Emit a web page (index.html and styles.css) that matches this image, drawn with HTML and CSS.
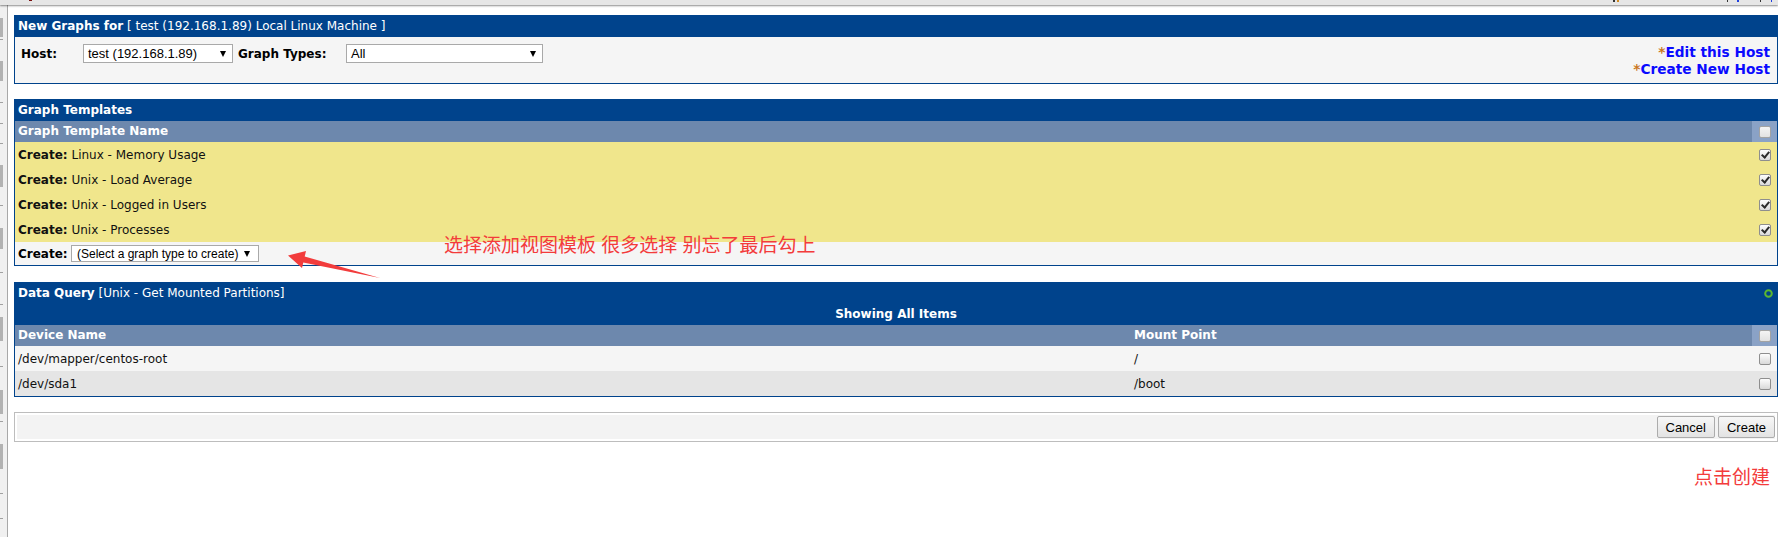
FILE: index.html
```html
<!DOCTYPE html>
<html lang="en">
<head>
<meta charset="utf-8">
<title>New Graphs</title>
<link rel="stylesheet" href="styles.css">
</head>
<body>
<div class="topbar">
  <i class="mk mk1"></i><i class="mk mk2"></i><i class="mk mk3"></i><i class="mk mk4"></i><i class="mk mk5"></i><i class="mk mk6"></i><i class="mk mk7"></i>
</div>
<div class="page">
  <div class="strip"></div>
  <main class="main">
    <section class="panel">
      <div class="hdr"><b>New Graphs for</b> [ test (192.168.1.89) Local Linux Machine ]</div>
      <div class="host-body">
        <div class="host-left">
          <span class="lbl host-lbl">Host:</span>
          <div class="sel sel-host"><span>test (192.168.1.89)</span><i class="caret"></i></div>
          <span class="lbl gt-lbl">Graph Types:</span>
          <div class="sel sel-type"><span>All</span><i class="caret"></i></div>
        </div>
        <div class="host-links">
          <a href="#"><span class="ast">*</span>Edit this Host</a>
          <a href="#"><span class="ast">*</span>Create New Host</a>
        </div>
      </div>
    </section>

    <section class="panel gap16">
      <div class="hdr"><b>Graph Templates</b></div>
      <div class="colhdr">
        <div class="c1">Graph Template Name</div>
        <div class="cbcell"><span class="cb cb-hdr"></span></div>
      </div>
      <div class="trow"><div class="c1"><b>Create:</b> Linux - Memory Usage</div><div class="cbwrap"><span class="cb on"></span></div></div>
      <div class="trow"><div class="c1"><b>Create:</b> Unix - Load Average</div><div class="cbwrap"><span class="cb on"></span></div></div>
      <div class="trow"><div class="c1"><b>Create:</b> Unix - Logged in Users</div><div class="cbwrap"><span class="cb on"></span></div></div>
      <div class="trow"><div class="c1"><b>Create:</b> Unix - Processes</div><div class="cbwrap"><span class="cb on"></span></div></div>
      <div class="create-row">
        <span class="lbl create-lbl">Create:</span>
        <div class="sel sel-small"><span>(Select a graph type to create)</span><i class="caret"></i></div>
      </div>
    </section>

    <section class="panel gap17">
      <div class="dq-hdr">
        <div class="dq-title">
          <span><b>Data Query</b> [Unix - Get Mounted Partitions]</span>
          <svg class="ring" width="9" height="9" viewBox="0 0 9 9"><circle cx="4.5" cy="4.5" r="3.3" fill="none" stroke="#5cb82f" stroke-width="2"/></svg>
        </div>
        <div class="dq-sub">Showing All Items</div>
      </div>
      <div class="grid3 colhdr3">
        <div class="cell">Device Name</div>
        <div class="cell">Mount Point</div>
        <div class="cbcell"><span class="cb cb-hdr"></span></div>
      </div>
      <div class="grid3 drow odd">
        <div class="cell">/dev/mapper/centos-root</div>
        <div class="cell">/</div>
        <div class="cbwrap"><span class="cb"></span></div>
      </div>
      <div class="grid3 drow even">
        <div class="cell">/dev/sda1</div>
        <div class="cell">/boot</div>
        <div class="cbwrap"><span class="cb"></span></div>
      </div>
    </section>

    <div class="actions">
      <div class="actions-inner">
        <button class="btn" type="button">Cancel</button>
        <button class="btn" type="button">Create</button>
      </div>
    </div>

    <div class="note">点击创建</div>
  </main>
</div>

<div class="annot">选择添加视图模板 很多选择 别忘了最后勾上</div>
<svg class="arrow" width="400" height="290" viewBox="0 0 400 290">
  <polygon points="288,255.5 306,251 304.7,256.6 380,278 303.3,262.4 302,268" fill="#f23c3c"/>
</svg>
</body>
</html>
```

FILE: styles.css
```css
html, body {
  margin: 0;
  padding: 0;
}

body {
  font-family: "DejaVu Sans", Verdana, sans-serif;
  font-size: 12px;
  color: #000;
  background: #fff;
  position: relative;
  overflow: hidden;
}

.topbar {
  position: relative;
  height: 5px;
  background: #e6e6e6;
  box-shadow: 0 1px 2px rgba(0, 0, 0, 0.45);
  z-index: 2;
}

.mk {
  position: absolute;
  top: 0;
  height: 2px;
  width: 2px;
  background: #333;
}
.mk1 { left: 29px; width: 3px; height: 1px; background: #7a1010; }
.mk2 { left: 1613px; }
.mk3 { left: 1617px; background: #d08a20; }
.mk4 { left: 1727px; width: 1px; }
.mk5 { left: 1737px; background: #2040e0; }
.mk6 { left: 1760px; width: 1px; }
.mk7 { left: 1771px; width: 1px; background: #2040e0; }

.page {
  display: flex;
  min-height: 532px;
}

.strip {
  flex: none;
  width: 7px;
  border-right: 1px solid #a8a8a8;
  background:
    linear-gradient(#b2b2b2, #b2b2b2) 0 13px / 3px 19px no-repeat,
    linear-gradient(#b2b2b2, #b2b2b2) 0 56px / 3px 20px no-repeat,
    linear-gradient(#b2b2b2, #b2b2b2) 0 160px / 3px 22px no-repeat,
    linear-gradient(#b2b2b2, #b2b2b2) 0 223px / 3px 21px no-repeat,
    linear-gradient(#b2b2b2, #b2b2b2) 0 312px / 3px 24px no-repeat,
    linear-gradient(#b2b2b2, #b2b2b2) 0 385px / 3px 24px no-repeat,
    linear-gradient(#b2b2b2, #b2b2b2) 0 439px / 3px 25px no-repeat,
    linear-gradient(#a0a0a0, #a0a0a0) 0 34px / 3px 1px no-repeat,
    linear-gradient(#a0a0a0, #a0a0a0) 0 97px / 3px 1px no-repeat,
    linear-gradient(#a0a0a0, #a0a0a0) 0 118px / 3px 1px no-repeat,
    linear-gradient(#a0a0a0, #a0a0a0) 0 138px / 3px 1px no-repeat,
    linear-gradient(#a0a0a0, #a0a0a0) 0 200px / 3px 1px no-repeat,
    linear-gradient(#a0a0a0, #a0a0a0) 0 267px / 3px 1px no-repeat,
    linear-gradient(#a0a0a0, #a0a0a0) 0 299px / 3px 1px no-repeat,
    linear-gradient(#a0a0a0, #a0a0a0) 0 361px / 3px 1px no-repeat,
    linear-gradient(#a0a0a0, #a0a0a0) 0 416px / 3px 1px no-repeat,
    linear-gradient(#a0a0a0, #a0a0a0) 0 488px / 3px 1px no-repeat,
    linear-gradient(#a0a0a0, #a0a0a0) 0 513px / 3px 1px no-repeat,
    #f0f0f0;
}

.main {
  flex: 1;
  min-width: 0;
  padding: 10px 0 0 6px;
}

.panel {
  border: 1px solid #00438c;
}
.gap16 { margin-top: 15px; }
.gap17 { margin-top: 16px; }

.hdr {
  background: #00438c;
  color: #fff;
  height: 21px;
  line-height: 21px;
  padding-left: 3px;
  white-space: nowrap;
}

b, .lbl { font-weight: bold; }

/* host row */
.host-body {
  box-sizing: border-box;
  height: 46px;
  background: #f5f5f5;
  display: flex;
  justify-content: space-between;
  align-items: flex-start;
  padding: 7px 7px 0 6px;
}
.host-left {
  display: flex;
  align-items: center;
  height: 19px;
}
.host-lbl { width: 62px; }
.gt-lbl { width: 108px; margin-left: 5px; }

.sel {
  box-sizing: border-box;
  height: 19px;
  border: 1px solid #a9a9a9;
  background: #fff;
  display: flex;
  align-items: center;
  justify-content: space-between;
  padding: 0 6px 0 4px;
  font-family: "Liberation Sans", Arial, sans-serif;
  font-size: 13px;
  color: #000;
  white-space: nowrap;
}
.sel-host { width: 150px; }
.sel-type { width: 197px; }
.sel-small {
  width: 188px;
  height: 17px;
  font-size: 12px;
  padding: 0 8px 0 5px;
}

.caret {
  display: block;
  width: 0;
  height: 0;
  border-left: 3.5px solid transparent;
  border-right: 3.5px solid transparent;
  border-top: 6px solid #000;
}

.host-links {
  display: flex;
  flex-direction: column;
  align-items: flex-end;
  font-weight: bold;
  font-size: 13.7px;
  line-height: 17px;
}
.host-links a {
  color: #0a0aff;
  text-decoration: none;
}
.ast { color: #c9771f; }

/* graph templates */
.colhdr {
  display: grid;
  grid-template-columns: 1fr 25px;
  background: #6d88ad;
  color: #fff;
  font-weight: bold;
  height: 21px;
  line-height: 21px;
}
.c1 { padding-left: 3px; white-space: nowrap; }

.cbcell {
  background: #8aa2c6;
  display: flex;
  align-items: center;
  justify-content: center;
}
.cbwrap {
  display: flex;
  align-items: center;
  justify-content: center;
}

.cb {
  display: block;
  position: relative;
  box-sizing: border-box;
  width: 12px;
  height: 12px;
  border: 1px solid #8e8e8e;
  border-radius: 2px;
  background: linear-gradient(#fdfdfd, #d9d9d9);
}
.cb-hdr {
  border-color: #a3a3a3;
  background: linear-gradient(#f4f4f4, #e2e2e2);
}
.cb.on::after {
  content: "";
  position: absolute;
  left: 3px;
  top: 0;
  width: 3px;
  height: 6px;
  border: solid #2b2b2b;
  border-width: 0 2px 2px 0;
  transform: rotate(40deg);
}

.trow {
  display: grid;
  grid-template-columns: 1fr 25px;
  align-items: center;
  height: 25px;
  background: #f0e68c;
  color: #111;
}

.create-row {
  box-sizing: border-box;
  height: 23px;
  background: #f5f5f5;
  display: flex;
  align-items: center;
  padding-left: 3px;
}
.create-lbl { width: 53px; }

/* data query */
.dq-hdr {
  background: #00438c;
  color: #fff;
}
.dq-title {
  height: 21px;
  line-height: 21px;
  display: flex;
  justify-content: space-between;
  align-items: center;
  padding: 0 4px 0 3px;
  white-space: nowrap;
}
.ring { display: block; }
.dq-sub {
  height: 21px;
  line-height: 21px;
  text-align: center;
  font-weight: bold;
}

.grid3 {
  display: grid;
  grid-template-columns: 1116px 1fr 25px;
  align-items: center;
}
.cell { padding-left: 3px; white-space: nowrap; }
.colhdr3 {
  height: 21px;
  background: #6d88ad;
  color: #fff;
  font-weight: bold;
  align-items: stretch;
  line-height: 21px;
}
.drow { height: 25px; color: #111; }
.odd { background: #f5f5f5; }
.even { background: #e5e5e5; }

/* actions */
.actions {
  margin-top: 15px;
  border: 1px solid #bdbdbd;
  padding: 2px;
}
.actions-inner {
  box-sizing: border-box;
  height: 24px;
  background: #f3f3f3;
  display: flex;
  justify-content: flex-end;
  align-items: center;
  gap: 3px;
}
.btn {
  box-sizing: border-box;
  height: 22px;
  margin: 0;
  padding: 0 8px;
  border: 1px solid #acacac;
  border-radius: 2px;
  background: linear-gradient(#f7f7f7, #e3e3e3);
  font-family: "Liberation Sans", Arial, sans-serif;
  font-size: 13px;
  color: #000;
}

.note {
  margin-top: 24px;
  text-align: right;
  padding-right: 8px;
  font-family: "Noto Sans CJK SC", sans-serif;
  font-size: 19px;
  line-height: 19px;
  color: #f33b3b;
}

/* annotation overlay */
.annot {
  position: absolute;
  left: 444px;
  top: 234px;
  font-family: "Noto Sans CJK SC", sans-serif;
  font-size: 19px;
  line-height: 19px;
  color: #f33b3b;
  white-space: nowrap;
  word-spacing: 1px;
}
.arrow {
  position: absolute;
  left: 0;
  top: 0;
  pointer-events: none;
}
```
